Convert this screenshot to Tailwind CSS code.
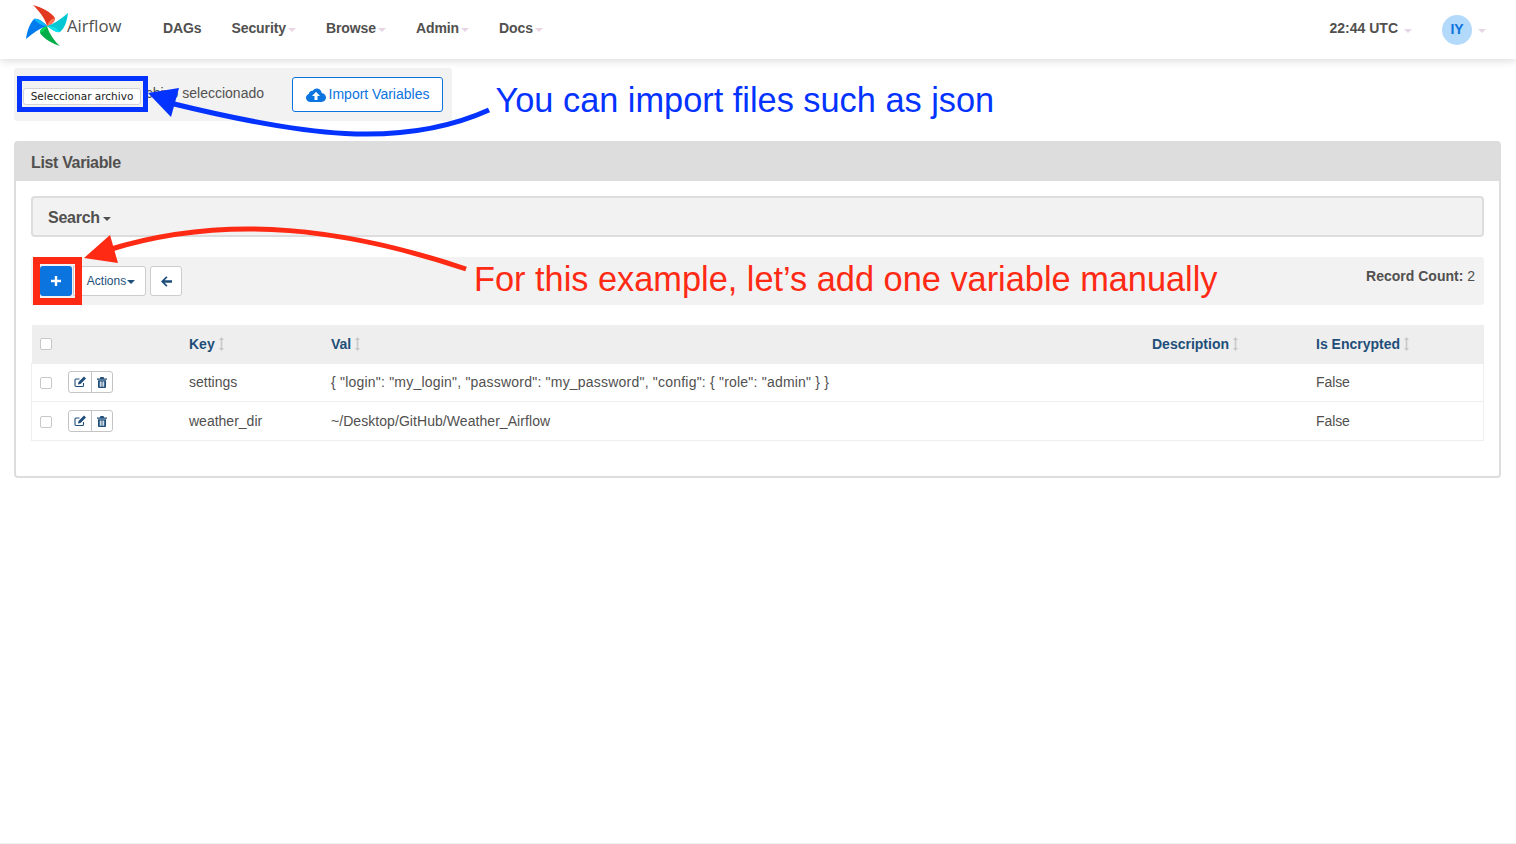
<!DOCTYPE html>
<html lang="en">
<head>
    <meta charset="UTF-8">
    <meta name="viewport" content="width=device-width, initial-scale=1.0">
    <title>Airflow - List Variable</title>
    <script src="https://cdn.jsdelivr.net/npm/@tailwindcss/browser@4"></script>
</head>
<body class="relative h-[844px] overflow-hidden bg-white font-['Liberation_Sans',Arial,sans-serif] text-[14px] text-[#51504f]">
    <!-- Navbar -->
    <header class="relative z-10 flex h-[59px] items-center bg-white shadow-[0_2px_8px_rgba(0,0,0,0.14)]">
        <div class="ml-[25px] flex w-[138px] items-center">
            <svg class="-mt-[7px] h-[44px] w-[44px] shrink-0" viewBox="0 0 44 44">
                <path d="M8 1 C16 3 26 8 30 14 C30 18 26 21 22 22 C20 14 14 7 8 1Z" fill="#e43921"/>
                <path d="M30 14 C30 18 26 21 22 22 C23 18 26 15 30 14Z" fill="#ff7557"/>
                <path d="M43 9 C42 17 40 24 35 28 C31 29 26 25 22 22 C29 20 36 15 43 9Z" fill="#00c7d4"/>
                <path d="M35 28 C31 29 26 25 22 22 C27 22 32 24 35 28Z" fill="#11e1ee"/>
                <path d="M35 42 C28 40 19 35 15 29 C15 25 18 23 22 22 C24 29 29 37 35 42Z" fill="#00ad46"/>
                <path d="M15 29 C15 25 18 23 22 22 C21 25 18 28 15 29Z" fill="#04d659"/>
                <path d="M1 35 C2 27 5 19 9 15 C14 14 19 19 22 22 C15 24 8 29 1 35Z" fill="#017cee"/>
                <path d="M9 15 C14 14 19 19 22 22 C17 22 12 19 9 15Z" fill="#0cb6ff"/>
            </svg>
            <span class="-ml-[2px] -mt-[7px] font-['Open_Sans',sans-serif] text-[16.7px] text-[#51504f]">Airflow</span>
        </div>
        <nav class="-mt-[2px] flex items-center gap-[30px] font-bold -tracking-[0.1px]">
            <a>DAGs</a>
            <a class="flex items-center">Security<span class="ml-[2px] mt-[2px] h-0 w-0 border-x-[4px] border-t-[4px] border-x-transparent border-t-[#e8d6e4]"></span></a>
            <a class="flex items-center">Browse<span class="ml-[2px] mt-[2px] h-0 w-0 border-x-[4px] border-t-[4px] border-x-transparent border-t-[#e8d6e4]"></span></a>
            <a class="flex items-center">Admin<span class="ml-[2px] mt-[2px] h-0 w-0 border-x-[4px] border-t-[4px] border-x-transparent border-t-[#e8d6e4]"></span></a>
            <a class="flex items-center">Docs<span class="ml-[2px] mt-[2px] h-0 w-0 border-x-[4px] border-t-[4px] border-x-transparent border-t-[#e8d6e4]"></span></a>
        </nav>
        <div class="ml-auto flex items-center pr-[30px] font-bold">
            <span class="-mt-[2px]">22:44 UTC</span>
            <span class="ml-[6px] mt-[2px] h-0 w-0 border-x-[4px] border-t-[4px] border-x-transparent border-t-[#e8d6e4]"></span>
            <span class="ml-[30px] flex h-[30px] w-[30px] items-center justify-center rounded-full bg-[#b3d9fb] text-[#0b74de]">IY</span>
            <span class="ml-[6px] mt-[2px] h-0 w-0 border-x-[4px] border-t-[4px] border-x-transparent border-t-[#e8d6e4]"></span>
        </div>
    </header>

    <main class="px-[14px] pt-[9px] pr-[15px]">
        <!-- Import form -->
        <div class="flex h-[53px] w-[438px] items-center rounded-[3px] bg-[#f2f2f2] pl-[9px]">
            <button class="relative z-10 mt-[3px] h-[17px] w-[118px] shrink-0 rounded-[3px] border border-[#d4d4d4] bg-white font-['DejaVu_Sans',sans-serif] text-[10.5px] leading-[15px] text-[#222]">Seleccionar archivo</button>
            <span class="-mt-[2px] ml-[5px] flex w-[118px] shrink-0 justify-end whitespace-nowrap">chivo seleccionado</span>
            <button class="ml-[28px] flex h-[35px] w-[151px] shrink-0 items-center justify-center gap-[3px] rounded-[3px] border border-[#0b74de] bg-white text-[#0b74de]">
                <svg class="h-[14px] w-[20px]" viewBox="0 0 20 14"><path fill="#0b74de" d="M4.500 14C2 14 0 12.200 0 9.800 0 8 1.100 6.500 2.800 5.900 3 3.800 4.800 2.400 6.800 2.700 8 1 9.700.3 11.400.5 13.800.8 15.500 2.700 15.700 5.100 18.200 5.500 20 7.300 20 9.600 20 12.100 18 14 15.500 14Z"/><path fill="#fff" d="M10 3.700 14 8H11.500V12H8.500V8H6Z"/></svg>
                Import Variables
            </button>
        </div>

        <!-- Panel -->
        <section class="mt-[20px] h-[337px] rounded-[4px] border-2 border-[#dddddd] bg-white">
            <div class="flex h-[38px] items-center bg-[#dddddd] px-[15px] pt-[1px] text-[16px] font-bold -tracking-[0.35px]">List Variable</div>
            <div class="px-[15px] pt-[15px]">
                <div class="flex h-[41px] items-center rounded-[4px] border-2 border-[#dddddd] bg-[#f2f2f2] px-[15px] pt-[2px] text-[16px] font-bold -tracking-[0.25px]">
                    Search<span class="ml-[3px] mt-[2px] h-0 w-0 border-x-[4px] border-t-[4px] border-x-transparent border-t-[#51504f]"></span>
                </div>

                <!-- Toolbar -->
                <div class="mt-[20px] flex h-[48px] items-center rounded-[3px] bg-[#f2f2f2] pl-[9px] pr-[9px]">
                    <button class="flex h-[30px] w-[32px] items-center justify-center rounded-[3px] bg-[#0b74de]">
                        <svg class="h-[10px] w-[10px]" viewBox="0 0 10 10"><path fill="#fff" d="M3.800 0H6.200V3.800H10V6.200H6.200V10H3.800V6.200H0V3.800H3.800Z"/></svg>
                    </button>
                    <button class="ml-[1px] flex h-[30px] w-[73px] items-center justify-center rounded-r-[3px] border border-[#cccccc] bg-white pl-[3px] text-[12px] text-[#1e4e79]">
                        Actions<span class="ml-[1px] mt-[1px] h-0 w-0 border-x-[4px] border-t-[4px] border-x-transparent border-t-[#1e4e79]"></span>
                    </button>
                    <button class="ml-[4px] flex h-[30px] w-[32px] items-center justify-center rounded-[3px] border border-[#cccccc] bg-white">
                        <svg class="h-[11px] w-[11px]" viewBox="0 0 11 11"><path fill="#1e4e79" d="M5.300.3 6.500 1.500 3.700 4.300H11V6.700H3.700L6.500 9.500 5.300 10.700 0 5.500Z"/></svg>
                    </button>
                    <p class="ml-auto -mt-[10px] text-[14px]"><b>Record Count:</b> 2</p>
                </div>

                <!-- Table -->
                <table class="mt-[20px] w-full table-fixed border-collapse">
                    <colgroup>
                        <col class="w-[29px]">
                        <col class="w-[121px]">
                        <col class="w-[142px]">
                        <col class="w-[821px]">
                        <col class="w-[164px]">
                        <col>
                    </colgroup>
                    <thead>
                        <tr class="h-[38px] bg-[#eeeeee] text-left text-[#1e4e79]">
                            <th class="pl-[8px] pt-[1px]"><span class="block h-[12px] w-[12px] rounded-[2px] border border-[#c8c8c8] bg-white"></span></th>
                            <th></th>
                            <th class="pl-[7.5px] pt-[1px]"><span class="flex items-center">Key<svg class="ml-[4px] h-[14px] w-[5px]" viewBox="0 0 5 14"><path fill="#c9c9c9" d="M2.500 0 5 3H3.300V11H5L2.500 14 0 11H1.700V3H0Z"/></svg></span></th>
                            <th class="pl-[7.5px] pt-[1px]"><span class="flex items-center">Val<svg class="ml-[4px] h-[14px] w-[5px]" viewBox="0 0 5 14"><path fill="#c9c9c9" d="M2.500 0 5 3H3.300V11H5L2.500 14 0 11H1.700V3H0Z"/></svg></span></th>
                            <th class="pl-[7.5px] pt-[1px]"><span class="flex items-center">Description<svg class="ml-[4px] h-[14px] w-[5px]" viewBox="0 0 5 14"><path fill="#c9c9c9" d="M2.500 0 5 3H3.300V11H5L2.500 14 0 11H1.700V3H0Z"/></svg></span></th>
                            <th class="pl-[7.5px] pt-[1px]"><span class="flex items-center">Is Encrypted<svg class="ml-[4px] h-[14px] w-[5px]" viewBox="0 0 5 14"><path fill="#c9c9c9" d="M2.500 0 5 3H3.300V11H5L2.500 14 0 11H1.700V3H0Z"/></svg></span></th>
                        </tr>
                    </thead>
                    <tbody>
                        <tr class="h-[38.5px] border border-[#eeeeee]">
                            <td class="pl-[8px] pt-[1px]"><span class="block h-[12px] w-[12px] rounded-[2px] border border-[#c8c8c8] bg-white"></span></td>
                            <td class="pl-[7px]">
                                <div class="flex h-[22px] w-[45px] rounded-[3px] border border-[#c4c4c4]">
                                    <span class="flex w-[23px] items-center justify-center border-r border-[#c4c4c4]">
                                        <svg class="h-[12px] w-[12px]" viewBox="0 0 12 12"><path fill="none" stroke="#1e4e79" stroke-width="1.100" d="M9.500 7V9.500A1 1 0 0 1 8.500 10.500H2A1 1 0 0 1 1 9.500V4A1 1 0 0 1 2 3H5.500"/><path fill="#1e4e79" d="M10 .5 12 2.500 6.500 8 4 8.500 4.500 6Z"/></svg>
                                    </span>
                                    <span class="flex flex-1 items-center justify-center">
                                        <svg class="h-[11px] w-[10px]" viewBox="0 0 10 11"><path fill="#1e4e79" fill-rule="evenodd" d="M3.500 0H6.500L7.200 1.500H10V2.700H0V1.500H2.800ZM1 3.300H9V10A1 1 0 0 1 8 11H2A1 1 0 0 1 1 10ZM2.800 4.500V9.800H3.800V4.500ZM4.500 4.500V9.800H5.500V4.500ZM6.200 4.500V9.800H7.200V4.500Z"/></svg>
                                    </span>
                                </div>
                            </td>
                            <td class="pl-[7.5px]">settings</td>
                            <td class="pl-[7.5px] tracking-[0.21px]">{ "login": "my_login", "password": "my_password", "config": { "role": "admin" } }</td>
                            <td></td>
                            <td class="pl-[7.5px] -tracking-[0.1px]">False</td>
                        </tr>
                        <tr class="h-[38.5px] border border-[#eeeeee]">
                            <td class="pl-[8px] pt-[2px]"><span class="block h-[12px] w-[12px] rounded-[2px] border border-[#c8c8c8] bg-white"></span></td>
                            <td class="pl-[7px] pt-[1px]">
                                <div class="flex h-[22px] w-[45px] rounded-[3px] border border-[#c4c4c4]">
                                    <span class="flex w-[23px] items-center justify-center border-r border-[#c4c4c4]">
                                        <svg class="h-[12px] w-[12px]" viewBox="0 0 12 12"><path fill="none" stroke="#1e4e79" stroke-width="1.100" d="M9.500 7V9.500A1 1 0 0 1 8.500 10.500H2A1 1 0 0 1 1 9.500V4A1 1 0 0 1 2 3H5.500"/><path fill="#1e4e79" d="M10 .5 12 2.500 6.500 8 4 8.500 4.500 6Z"/></svg>
                                    </span>
                                    <span class="flex flex-1 items-center justify-center">
                                        <svg class="h-[11px] w-[10px]" viewBox="0 0 10 11"><path fill="#1e4e79" fill-rule="evenodd" d="M3.500 0H6.500L7.200 1.500H10V2.700H0V1.500H2.800ZM1 3.300H9V10A1 1 0 0 1 8 11H2A1 1 0 0 1 1 10ZM2.800 4.500V9.800H3.800V4.500ZM4.500 4.500V9.800H5.500V4.500ZM6.200 4.500V9.800H7.200V4.500Z"/></svg>
                                    </span>
                                </div>
                            </td>
                            <td class="pl-[7.5px] pt-[1px]">weather_dir</td>
                            <td class="pl-[7.5px] pt-[1px] tracking-[0.06px]">~/Desktop/GitHub/Weather_Airflow</td>
                            <td></td>
                            <td class="pl-[7.5px] pt-[1px] -tracking-[0.1px]">False</td>
                        </tr>
                    </tbody>
                </table>
            </div>
        </section>
    </main>

    <!-- Footer line -->
    <div class="absolute inset-x-0 bottom-0 h-px bg-[#f2f2f2]"></div>

    <!-- Annotations drawn over the screenshot -->
    <div class="absolute left-[17px] top-[76px] z-20 h-[36px] w-[131px] border-[5px] border-[#0433ff]"></div>
    <div class="absolute left-[33px] top-[257px] z-20 h-[48px] w-[49px] border-[7px] border-[#ff2a14]"></div>
    <svg class="absolute left-0 top-0 z-20 h-[844px] w-[1516px]" viewBox="0 0 1516 844" fill="none">
        <path d="M489 110 C400 150 300 135 170 103" stroke="#0433ff" stroke-width="5"/>
        <path d="M148 93 L179 88 L171 117 Z" fill="#0433ff"/>
        <path d="M466 269 C350 230 230 212 108 250" stroke="#ff2a14" stroke-width="5"/>
        <path d="M84 258 L110 235 L118 263 Z" fill="#ff2a14"/>
    </svg>
    <p class="absolute left-[495.5px] top-[79px] z-20 whitespace-nowrap text-[34.35px] leading-[42px] text-[#0433ff]">You can import files such as json</p>
    <p class="absolute left-[474px] top-[257.5px] z-20 whitespace-nowrap text-[34.35px] leading-[42px] text-[#ff2a14]">For this example, let’s add one variable manually</p>
</body>
</html>
